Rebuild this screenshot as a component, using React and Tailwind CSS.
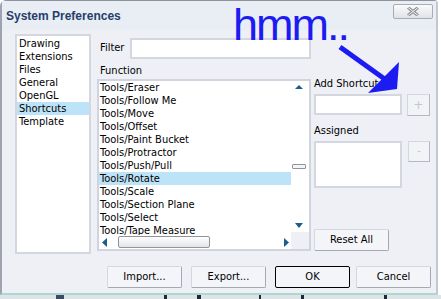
import React from "react";

const font = { fontFamily: '"DejaVu Sans Condensed", "Liberation Sans", Arial, sans-serif' };
const arial = { fontFamily: '"Liberation Sans", Arial, sans-serif' };

const leftItems = ["Drawing", "Extensions", "Files", "General", "OpenGL", "Shortcuts", "Template"];
const functions = [
  "Tools/Eraser",
  "Tools/Follow Me",
  "Tools/Move",
  "Tools/Offset",
  "Tools/Paint Bucket",
  "Tools/Protractor",
  "Tools/Push/Pull",
  "Tools/Rotate",
  "Tools/Scale",
  "Tools/Section Plane",
  "Tools/Select",
  "Tools/Tape Measure",
];

const Btn = ({ children, className = "", strong }) => (
  <div
    className={`flex items-center justify-center h-[22px] w-[75px] rounded-[2px] bg-[#f4f5f8] text-[11px] text-black ${
      strong
        ? "border border-black"
        : "border border-[#d3d7df] border-r-[#a3a8b3] border-b-[#a3a8b3]"
    } ${className}`}
  >
    {children}
  </div>
);

const Tri = ({ dir, className = "" }) => {
  const pts = {
    up: "0,4 4,0 8,4",
    down: "0,0 8,0 4,5",
    left: "5,0 5,9 0,4.5",
    right: "0,0 0,9 5,4.5",
  }[dir];
  const w = dir === "up" || dir === "down" ? 8 : 5;
  const h = dir === "up" ? 4 : dir === "down" ? 5 : 9;
  return (
    <svg width={w} height={h} className={className}>
      <polygon points={pts} fill="#1f5b8c" />
    </svg>
  );
};

export default function App() {
  return (
    <div className="relative w-[441px] h-[299px] overflow-hidden bg-white" style={font}>
      <div className="flex flex-col w-[438px] h-[295px] bg-[#eef0f6] border-l-2 border-t border-r-2 border-b-2 border-l-[#9ea3ad] border-t-[#8e939d] border-r-[#c3c7cf] border-b-[#a9d9cf] rounded-tl-[6px] rounded-tr-[4px]">
        {/* title bar */}
        <div className="flex items-center justify-between h-[29px] pl-[4px] pr-[3px] bg-[#e9edf4]">
          <span className="text-[12px] font-bold text-[#25406a]" style={arial}>System Preferences</span>
          <div className="flex items-center justify-center w-[40px] h-[15px] -mt-[9px] rounded-[2px] border border-[#a7acb6] bg-gradient-to-b from-[#fbfbfc] to-[#dfe2e8]">
            <svg width="12" height="9" viewBox="0 0 12 9">
              <path d="M1 0.5 L11 8.5 M11 0.5 L1 8.5" stroke="#8c9098" strokeWidth="3" />
              <path d="M1 0.5 L11 8.5 M11 0.5 L1 8.5" stroke="#f4f4f4" strokeWidth="1" />
            </svg>
          </div>
        </div>

        {/* main area */}
        <div className="flex pl-[13px] pt-[4px] text-[11px] text-black">
          {/* category list */}
          <div className="w-[76px] h-[220px] bg-white border-2 border-[#d3d7e0] pt-[1px]">
            {leftItems.map((t) => (
              <div
                key={t}
                className={`h-[13px] leading-[13px] pl-[2px] ${t === "Shortcuts" ? "bg-[#bde3f8]" : ""}`}
              >
                {t}
              </div>
            ))}
          </div>

          {/* function column */}
          <div className="flex flex-col w-[214px] ml-[6px]">
            <div className="flex items-center mt-[4px] h-[21px]">
              <span className="w-[33px] pl-[3px]">Filter</span>
              <div className="flex-1 h-[21px] bg-white border-2 border-[#d3d7e0]" />
            </div>
            <div className="mt-[5px] h-[13px] leading-[13px] pl-[3px]">Function</div>
            <div className="flex mt-[2px] h-[172px] bg-white border-2 border-[#d0d4de]">
              <div className="flex flex-col w-[192px]">
                <div className="h-[154px] overflow-hidden">
                  {functions.map((t) => (
                    <div
                      key={t}
                      className={`h-[13px] leading-[13px] pl-[1px] whitespace-nowrap ${
                        t === "Tools/Rotate" ? "bg-[#bde3f8]" : ""
                      }`}
                    >
                      {t}
                    </div>
                  ))}
                </div>
                <div className="flex items-center h-[14px]">
                  <Tri dir="left" className="ml-[3px]" />
                  <div className="ml-[11px] w-[92px] h-[12px] rounded-[2px] border border-[#8f939b] bg-gradient-to-b from-white to-[#e3e4e7]" />
                  <Tri dir="right" className="ml-[74px]" />
                </div>
              </div>
              <div className="flex flex-col w-[18px]">
                <div className="flex flex-col h-[151px]">
                  <Tri dir="up" className="mt-[4px] ml-[4px]" />
                  <div className="mt-[75px] ml-[1px] w-[14px] h-[5px] rounded-[1px] border border-[#8f939b] bg-[#f4f4f4]" />
                  <Tri dir="down" className="mt-[54px] ml-[4px]" />
                </div>
                <div className="h-[17px] bg-[#eef0f6]" />
              </div>
            </div>
          </div>

          {/* shortcut column */}
          <div className="flex flex-col ml-[3px] w-[117px]">
            <div className="mt-[43px] h-[13px] leading-[13px]">Add Shortcut</div>
            <div className="flex items-start mt-[4px]">
              <div className="w-[88px] h-[21px] bg-white border-2 border-[#d3d7e0]" />
              <div className="flex items-center justify-center ml-[5px] w-[23px] h-[22px] border border-[#d3d7df] border-r-[#b3b8c2] border-b-[#b3b8c2] bg-[#f2f3f6] text-[13px] text-[#c3c6cc]">
                +
              </div>
            </div>
            <div className="mt-[8px] h-[13px] leading-[13px]">Assigned</div>
            <div className="flex items-start mt-[4px]">
              <div className="w-[88px] h-[47px] bg-white border-2 border-[#d3d7e0]" />
              <div className="flex items-center justify-center ml-[6px] w-[22px] h-[21px] border border-[#d3d7df] border-r-[#b3b8c2] border-b-[#b3b8c2] bg-[#f2f3f6] text-[11px] text-[#c3c6cc]">
                -
              </div>
            </div>
            <Btn className="mt-[41px] w-[74px]">Reset All</Btn>
          </div>
        </div>

        {/* bottom buttons */}
        <div className="flex mt-[12px] pl-[105px]">
          <Btn>Import...</Btn>
          <Btn className="ml-[9px]">Export...</Btn>
          <Btn className="ml-[9px]" strong>OK</Btn>
          <Btn className="ml-[6px]">Cancel</Btn>
        </div>
      </div>

      {/* strip below the window */}
      <div className="flex h-[4px] bg-[#dfe3e8]">
        <div className="ml-[56px] w-[8px] bg-[#3c4a66]" />
        <div className="ml-[100px] w-[3px] bg-[#202838]" />
        <div className="ml-[30px] w-[4px] bg-[#202838]" />
        <div className="ml-[58px] w-[2px] bg-[#202838]" />
        <div className="ml-[40px] w-[3px] bg-[#202838]" />
        <div className="ml-[80px] w-[3px] bg-[#202838]" />
      </div>

      {/* scribbled note */}
      <div
        className="absolute left-[233px] top-[2px] text-[45px] leading-none tracking-[-2px] text-[#1b1bf2]"
        style={arial}
      >
        hmm..
      </div>
      <svg className="absolute left-0 top-0" width="441" height="299">
        <line x1="340" y1="47" x2="386" y2="80" stroke="#1b1bf2" strokeWidth="5" />
        <polygon points="399,62 368,93 397,89" fill="#1b1bf2" />
      </svg>
    </div>
  );
}
